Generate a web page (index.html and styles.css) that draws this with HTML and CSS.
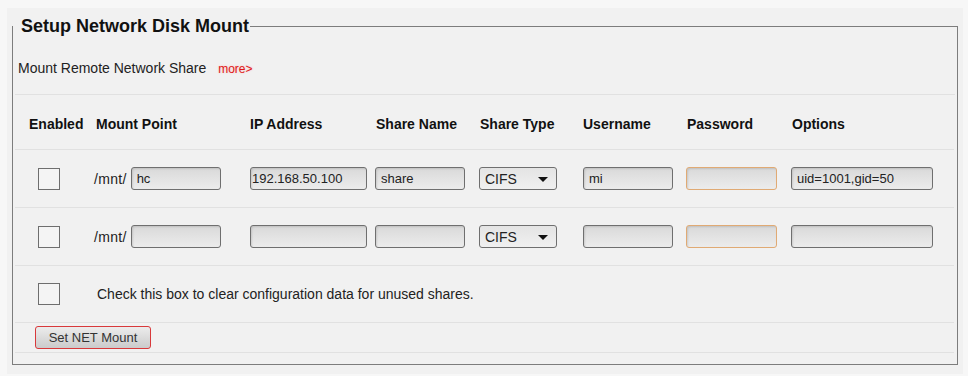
FILE: index.html
```html
<!DOCTYPE html>
<html lang="en">
<head>
<meta charset="utf-8">
<title>Setup Network Disk Mount</title>
<link rel="stylesheet" href="styles.css">
</head>
<body>
<div class="panel">
  <fieldset class="box">
    <legend class="title">Setup Network Disk Mount</legend>
    <div class="intro">Mount Remote Network Share <a class="more" href="#">more&gt;</a></div>
    <table class="grid">
      <colgroup>
        <col class="c1"><col class="c2"><col class="c3"><col class="c4">
        <col class="c5"><col class="c6"><col class="c7"><col class="c8">
      </colgroup>
      <thead>
        <tr>
          <th class="h-en">Enabled</th>
          <th class="h-mp">Mount Point</th>
          <th class="h-ip">IP Address</th>
          <th>Share Name</th>
          <th>Share Type</th>
          <th class="h-ip">Username</th>
          <th>Password</th>
          <th>Options</th>
        </tr>
      </thead>
      <tbody>
        <tr>
          <td class="cb-cell"><input type="checkbox" class="cb"></td>
          <td><div class="mnt"><span>/mnt/</span><input class="field w90" type="text" value="hc"></div></td>
          <td><input class="field w117 ip" type="text" value="192.168.50.100"></td>
          <td><input class="field w90" type="text" value="share"></td>
          <td><div class="sel"><select class="select"><option>CIFS</option><option>NFS</option></select></div></td>
          <td><input class="field w90" type="text" value="mi"></td>
          <td><input class="field w91 pw" type="password" value=""></td>
          <td><input class="field w142" type="text" value="uid=1001,gid=50"></td>
        </tr>
        <tr>
          <td class="cb-cell"><input type="checkbox" class="cb"></td>
          <td><div class="mnt"><span>/mnt/</span><input class="field w90" type="text" value=""></div></td>
          <td><input class="field w117 ip" type="text" value=""></td>
          <td><input class="field w90" type="text" value=""></td>
          <td><div class="sel"><select class="select"><option>CIFS</option><option>NFS</option></select></div></td>
          <td><input class="field w90" type="text" value=""></td>
          <td><input class="field w91 pw" type="password" value=""></td>
          <td><input class="field w142" type="text" value=""></td>
        </tr>
        <tr>
          <td class="cb-cell"><input type="checkbox" class="cb"></td>
          <td class="note" colspan="7">Check this box to clear configuration data for unused shares.</td>
        </tr>
        <tr>
          <td class="btn-cell" colspan="8"><button class="btn" type="button">Set NET Mount</button></td>
        </tr>
      </tbody>
    </table>
  </fieldset>
</div>
</body>
</html>
```

FILE: styles.css
```css
html, body {
  margin: 0;
  padding: 0;
}
body {
  background: #f7f7f7;
  font-family: "Liberation Sans", Arial, sans-serif;
  font-size: 14px;
  color: #222;
}
.panel {
  margin: 8px 5px 3px 7px;
  padding: 8px 5px 9px 5px;
  background: #f1f1f1;
}
.box {
  margin: 0;
  min-width: 0;
  padding: 0 2px 11px 2px;
  border: 1px solid #7d7d7d;
}
.title {
  margin-left: -2px;
  padding: 0 1px 0 8px;
  font-size: 18px;
  line-height: 21px;
  font-weight: bold;
  color: #111;
}
.intro {
  padding: 23px 0 17px 3px;
  line-height: 16px;
  border-bottom: 1px solid #e1e1e1;
}
.more {
  margin-left: 8px;
  font-size: 12px;
  color: #e01818;
  text-decoration: none;
  text-shadow: 0 0 2px rgba(255, 60, 60, 0.25);
}
.grid {
  width: 939px;
  table-layout: fixed;
  border-collapse: separate;
  border-spacing: 0;
}
.c1 { width: 79px; }
.c2 { width: 156px; }
.c3 { width: 125px; }
.c4 { width: 104px; }
.c5 { width: 104px; }
.c6 { width: 103px; }
.c7 { width: 105px; }
.c8 { width: 163px; }
.grid th {
  text-align: left;
  font-weight: bold;
  color: #111;
  line-height: 16px;
  padding: 21px 0 17px 1px;
  border-bottom: 1px solid #e1e1e1;
  white-space: nowrap;
}
.grid th.h-en { padding-left: 14px; }
.grid th.h-mp { padding-left: 2px; }
.grid th.h-ip { padding-left: 0; }
.grid td {
  padding: 17px 0;
  line-height: 16px;
  vertical-align: middle;
  border-bottom: 1px solid #e1e1e1;
}
.grid td.cb-cell { padding-left: 23px; }
.grid td.note { padding-left: 3px; }
.grid td.btn-cell { padding: 3px 0 3px 20px; }
.mnt {
  display: flex;
  align-items: center;
}
.mnt span { letter-spacing: 0.3px; }
.mnt .field { margin-left: 4px; }
.field {
  display: block;
  box-sizing: border-box;
  height: 23px;
  margin: 0;
  padding: 0 5px;
  border: 1px solid #6f6f6f;
  border-radius: 3px;
  background: linear-gradient(#d9d9d9, #ececec);
  box-shadow: inset 1px 1px 2px rgba(0, 0, 0, 0.12);
  font-family: "Liberation Sans", Arial, sans-serif;
  font-size: 13px;
  color: #222;
  outline: none;
}
.field.ip { padding-left: 1px; }
.field.pw { border-color: #e0aa74; }
.w90 { width: 90px; }
.w91 { width: 91px; }
.w117 { width: 117px; }
.w142 { width: 142px; }
.sel {
  position: relative;
  width: 78px;
  height: 23px;
}
.sel::after {
  content: "";
  position: absolute;
  left: 59px;
  top: 10px;
  border-left: 5px solid transparent;
  border-right: 5px solid transparent;
  border-top: 5px solid #111;
  pointer-events: none;
}
.select {
  -webkit-appearance: none;
  appearance: none;
  display: block;
  box-sizing: border-box;
  width: 78px;
  height: 23px;
  margin: 0;
  padding: 0 5px;
  border: 1px solid #6f6f6f;
  border-radius: 3px;
  background: linear-gradient(#e4e4e4, #f0f0f0);
  font-family: "Liberation Sans", Arial, sans-serif;
  font-size: 14px;
  color: #222;
}
.cb {
  -webkit-appearance: none;
  appearance: none;
  display: block;
  box-sizing: border-box;
  width: 22px;
  height: 22px;
  margin: 0;
  border: 1px solid #6e6e6e;
  background: #f4f4f4;
}
.btn {
  display: block;
  box-sizing: border-box;
  width: 116px;
  height: 23px;
  margin: 0;
  padding: 0;
  border: 1px solid #d8393b;
  border-radius: 3px;
  background: linear-gradient(#ececec, #cbcbcb);
  font-family: "Liberation Sans", Arial, sans-serif;
  font-size: 13px;
  color: #333;
}
```
